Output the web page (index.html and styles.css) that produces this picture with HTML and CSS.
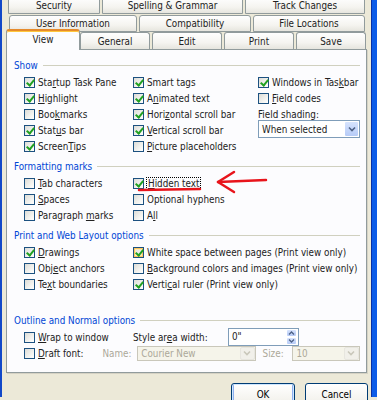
FILE: index.html
```html
<!DOCTYPE html>
<html lang="en">
<head>
  <meta charset="UTF-8">
  <meta name="viewport" content="width=device-width, initial-scale=1.0">
  <title>Options</title>
  <link rel="stylesheet" href="styles.css">
</head>
<body>
  <div class="window">
    <div class="dialog">
      <div class="tabs">
        <div class="tab-row row-top">
          <div class="tab">Security</div>
          <div class="tab">Spelling &amp; Grammar</div>
          <div class="tab">Track Changes</div>
        </div>
        <div class="tab-row row-middle">
          <div class="tab">User Information</div>
          <div class="tab">Compatibility</div>
          <div class="tab">File Locations</div>
        </div>
        <div class="tab-row row-front">
          <div class="tab active">View</div>
          <div class="tab">General</div>
          <div class="tab">Edit</div>
          <div class="tab">Print</div>
          <div class="tab">Save</div>
        </div>
      </div>

      <div class="panel">
        <section class="group">
          <div class="legend">Show</div>
          <div class="options options-show">
            <label class="check"><span class="box checked"></span><span>Sta<u>r</u>tup Task Pane</span></label>
            <label class="check"><span class="box checked"></span><span><u>H</u>ighlight</span></label>
            <label class="check"><span class="box"></span><span>Boo<u>k</u>marks</span></label>
            <label class="check"><span class="box checked"></span><span>Stat<u>u</u>s bar</span></label>
            <label class="check"><span class="box checked"></span><span>Screen<u>T</u>ips</span></label>

            <label class="check"><span class="box checked"></span><span>Smart tags</span></label>
            <label class="check"><span class="box checked"></span><span>A<u>n</u>imated text</span></label>
            <label class="check"><span class="box checked"></span><span>Hori<u>z</u>ontal scroll bar</span></label>
            <label class="check"><span class="box checked"></span><span><u>V</u>ertical scroll bar</span></label>
            <label class="check"><span class="box"></span><span><u>P</u>icture placeholders</span></label>

            <label class="check"><span class="box checked"></span><span>Windows in Tas<u>k</u>bar</span></label>
            <label class="check"><span class="box"></span><span><u>F</u>ield codes</span></label>
            <div class="field-label"><span>Field shadin<u>g</u>:</span></div>
            <div class="select field-shading">
              <span class="select-value">When selected</span>
              <span class="select-arrow">
                <svg viewBox="0 0 8 6" width="8" height="6"><path d="M1 1.5 L4 4.5 L7 1.5" fill="none" stroke="currentColor" stroke-width="1.6"/></svg>
              </span>
            </div>
          </div>
        </section>

        <section class="group">
          <div class="legend">Formatting marks</div>
          <div class="options options-two">
            <label class="check"><span class="box"></span><span><u>T</u>ab characters</span></label>
            <label class="check"><span class="box"></span><span><u>S</u>paces</span></label>
            <label class="check"><span class="box"></span><span>Paragraph <u>m</u>arks</span></label>

            <label class="check"><span class="box checked"></span><span class="focus"><u>H</u>idden text</span></label>
            <label class="check"><span class="box"></span><span>Optional hyphens</span></label>
            <label class="check"><span class="box"></span><span>A<u>l</u>l</span></label>
          </div>
        </section>

        <section class="group">
          <div class="legend">Print and Web Layout options</div>
          <div class="options options-two options-tall">
            <label class="check"><span class="box checked"></span><span><u>D</u>rawings</span></label>
            <label class="check"><span class="box"></span><span>Obj<u>e</u>ct anchors</span></label>
            <label class="check"><span class="box"></span><span>Te<u>x</u>t boundaries</span></label>

            <label class="check"><span class="box checked hot"></span><span>White space between pages (Print view only)</span></label>
            <label class="check"><span class="box"></span><span><u>B</u>ackground colors and images (Print view only)</span></label>
            <label class="check"><span class="box checked"></span><span>Verti<u>c</u>al ruler (Print view only)</span></label>
          </div>
        </section>

        <section class="group">
          <div class="legend">Outline and Normal options</div>
          <div class="outline-row first">
            <label class="check wrap-check"><span class="box"></span><span><u>W</u>rap to window</span></label>
            <span class="style-label">Style ar<u>e</u>a width:</span>
            <div class="spin">
              <span class="spin-value">0"</span>
              <span class="spin-buttons">
                <span class="spin-btn"><svg viewBox="0 0 7 4" width="7" height="4"><path d="M1 3.5 L3.5 1 L6 3.5" fill="none" stroke="currentColor" stroke-width="1.3"/></svg></span>
                <span class="spin-btn"><svg viewBox="0 0 7 4" width="7" height="4"><path d="M1 0.5 L3.5 3 L6 0.5" fill="none" stroke="currentColor" stroke-width="1.3"/></svg></span>
              </span>
            </div>
          </div>
          <div class="outline-row">
            <label class="check draft-check"><span class="box"></span><span><u>D</u>raft font:</span></label>
            <span class="muted name-label">Name:</span>
            <div class="select disabled font-name">
              <span class="select-value">Courier New</span>
              <span class="select-arrow">
                <svg viewBox="0 0 8 6" width="8" height="6"><path d="M1 1.5 L4 4.5 L7 1.5" fill="none" stroke="currentColor" stroke-width="1.6"/></svg>
              </span>
            </div>
            <span class="muted size-label">Size:</span>
            <div class="select disabled font-size">
              <span class="select-value">10</span>
              <span class="select-arrow">
                <svg viewBox="0 0 8 6" width="8" height="6"><path d="M1 1.5 L4 4.5 L7 1.5" fill="none" stroke="currentColor" stroke-width="1.6"/></svg>
              </span>
            </div>
          </div>
        </section>
      </div>

      <div class="buttons">
        <button class="btn default">OK</button>
        <button class="btn">Cancel</button>
      </div>
    </div>
  </div>

  <!-- red hand-drawn annotation pointing at "Hidden text" -->
  <svg class="annotation" viewBox="0 0 377 400" width="377" height="400">
    <path d="M139 190 L200 189" />
    <path d="M266 180 L218 182" />
    <path d="M234 172 L218 182 L234 192" />
  </svg>
</body>
</html>
```

FILE: styles.css
```css
:root {
  --xp-face: #ece9d8;
  --xp-panel: #fcfcfe;
  --xp-tab-border: #919b9c;
  --xp-legend: #0046d5;
  --xp-rule: #d0d0bf;
  --xp-check-border: #1c5180;
  --xp-check: #21a121;
  --xp-input-border: #7f9db9;
  --xp-muted: #aca899;
  --font-ui: "DejaVu Sans Condensed", "Liberation Sans", Arial, sans-serif;
}

* {
  margin: 0;
  padding: 0;
  box-sizing: border-box;
}

body {
  position: relative;
  width: 377px;
  height: 400px;
  overflow: hidden;
  font-family: var(--font-ui);
  font-size: 9.8px;
  color: #222;
  background-color: var(--xp-face);
}

u {
  text-decoration-thickness: 1px;
  text-underline-offset: 1px;
}

/* Window frame */
.window {
  height: 400px;
  border-left: 2px solid #1248c8;
  border-right: 5px solid #0c5ce8;
}

.dialog {
  height: 100%;
  border-right: 1px solid #0831a4;
}

/* Tabs */
.tabs {
  margin-top: -3px;
}

.tab-row {
  display: flex;
  height: 17px;
}

.row-top {
  margin-left: 6px;
  gap: 2px;
}

.row-top .tab:nth-child(1) { width: 92px; }
.row-top .tab:nth-child(2) { width: 141px; }
.row-top .tab:nth-child(3) { width: 120px; }

.row-middle {
  margin-top: 1px;
  margin-left: 7px;
  gap: 2px;
}

.row-middle .tab:nth-child(1) { width: 128px; }
.row-middle .tab:nth-child(2) { width: 112px; }
.row-middle .tab:nth-child(3) { width: 112px; }

.row-front {
  margin-left: 4px;
  align-items: flex-end;
}

.row-front .tab { width: 70px; margin-left: 2px; }
.row-front .tab:nth-child(2) { margin-left: 0; }

.tab {
  display: flex;
  align-items: center;
  justify-content: center;
  height: 17px;
  border: 1px solid var(--xp-tab-border);
  border-radius: 3px 3px 0 0;
  background: linear-gradient(#fefefe, #f5f4f0 60%, #e6e5de);
  white-space: nowrap;
}

.row-front .tab {
  border-bottom: none;
}

.row-front .tab.active {
  position: relative;
  z-index: 1;
  width: 74px;
  height: 21px;
  margin-left: 0;
  margin-bottom: -1px;
  padding-bottom: 3px;
  background: var(--xp-panel);
  border-top: 2px solid #e68b2c;
  box-shadow: inset 0 1px 0 #ffc73c;
}

/* Panel */
.panel {
  width: 361px;
  height: 324px;
  margin-left: 4px;
  padding: 7px 6px 0 0;
  border: 1px solid var(--xp-tab-border);
  background-color: var(--xp-panel);
  box-shadow: 1px 1px 0 #d5d2c4;
}

.group {
  margin-bottom: 4px;
}

.legend {
  display: flex;
  align-items: center;
  gap: 5px;
  height: 16px;
  padding-left: 7px;
  color: var(--xp-legend);
}

.legend::after {
  content: "";
  flex: 1;
  height: 1px;
  background-color: var(--xp-rule);
}

.options {
  display: grid;
  grid-auto-flow: column;
  grid-template-rows: repeat(3, 16px);
  grid-template-columns: 109px 1fr;
  margin-top: 1px;
  padding-left: 17px;
}

.options-show {
  grid-template-rows: repeat(5, 16px);
  grid-template-columns: 109px 125px 1fr;
}

.options-tall {
  padding-bottom: 16px;
}

.check {
  display: flex;
  align-items: center;
  gap: 3px;
  white-space: nowrap;
}

.box {
  position: relative;
  flex: none;
  width: 11px;
  height: 11px;
  border: 1px solid var(--xp-check-border);
  background: linear-gradient(135deg, #dcdcd7, #f6f6f3 70%, #fff);
}

.box.checked::after {
  content: "";
  position: absolute;
  left: 3px;
  top: 0px;
  width: 3px;
  height: 6px;
  border: solid var(--xp-check);
  border-width: 0 2px 2px 0;
  transform: rotate(40deg);
}

.box.hot {
  box-shadow: inset 0 0 0 1px #fbc761, inset 0 0 0 2px #fde9b4;
}

.focus {
  outline: 1px dotted #000;
  outline-offset: 0;
  padding: 0 1px;
}

.field-label {
  display: flex;
  align-items: center;
}

/* Combo boxes */
.select {
  display: flex;
  align-items: center;
  height: 18px;
  border: 1px solid var(--xp-input-border);
  background-color: #fff;
}

.field-shading {
  grid-row: span 2;
  align-self: start;
  margin-top: -2px;
}

.select-value {
  flex: 1;
  padding-left: 3px;
  white-space: nowrap;
  overflow: hidden;
}

.select-arrow {
  display: flex;
  align-items: center;
  justify-content: center;
  width: 15px;
  height: 100%;
  border: 1px solid #fff;
  border-radius: 2px;
  background: linear-gradient(#d6e3fd, #b6cbf7);
  color: #4d6185;
}

.select.disabled {
  height: 15px;
  border-color: #c9c7ba;
  background-color: #f5f4ea;
  color: var(--xp-muted);
}

.select.disabled .select-arrow {
  background: #f1f0ea;
  border-color: #e7e6df;
  color: #c9c7ba;
}

/* Outline rows */
.outline-row {
  display: flex;
  align-items: center;
  height: 16px;
  padding-left: 17px;
}

.outline-row.first {
  margin-top: 1px;
}

.wrap-check { width: 109px; }
.style-label { width: 95px; }

.spin {
  display: flex;
  align-items: stretch;
  width: 71px;
  height: 18px;
  border: 1px solid var(--xp-input-border);
  background-color: #fff;
}

.spin-value {
  flex: 1;
  padding-left: 3px;
  line-height: 16px;
}

.spin-buttons {
  display: flex;
  flex-direction: column;
  width: 11px;
  margin-right: 1px;
}

.spin-btn {
  flex: 1;
  display: flex;
  align-items: center;
  justify-content: center;
  border: 1px solid #fff;
  border-radius: 2px;
  background: linear-gradient(#d6e3fd, #b6cbf7);
  color: #4d6185;
}

.draft-check { width: 79px; }
.muted { color: var(--xp-muted); }
.name-label { width: 35px; }
.font-name { width: 119px; }
.size-label { width: 30px; margin-left: 7px; }
.font-size { width: 68px; }

/* Buttons */
.buttons {
  display: flex;
  justify-content: flex-end;
  gap: 10px;
  margin-top: 10px;
  margin-right: 3px;
}

.btn {
  width: 63px;
  height: 22px;
  font-family: var(--font-ui);
  font-size: 9.8px;
  color: #000;
  border: 1px solid #003c74;
  border-radius: 3px;
  background: linear-gradient(#fff, #f4f3ee 80%, #d6d0c5);
}

.btn.default {
  width: 64px;
  box-shadow: inset 0 0 0 1px #cee7ff, inset 0 -1px 0 2px #8fb0ef;
}

/* Annotation overlay */
.annotation {
  position: absolute;
  left: 0;
  top: 0;
  pointer-events: none;
  fill: none;
  stroke: #e8141b;
  stroke-width: 2.5;
  stroke-linecap: round;
  stroke-linejoin: round;
}
```
